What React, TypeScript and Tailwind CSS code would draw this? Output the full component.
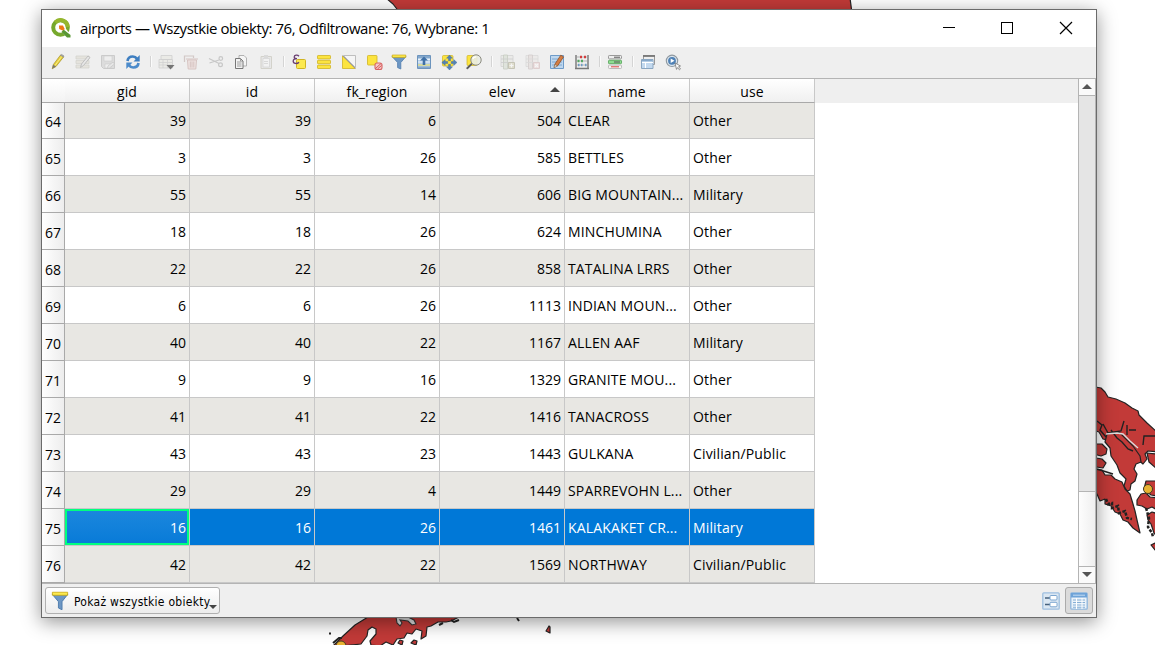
import React from "react";

type IconProps = { children: React.ReactNode; faded?: boolean };

const Icon = ({ children, faded }: IconProps) => (
  <div className="flex w-[25px] shrink-0 items-center">
    <svg viewBox="0 0 16 16" className={faded ? "h-4 w-4 overflow-visible opacity-40" : "h-4 w-4 overflow-visible"} fill="none">
      {children}
    </svg>
  </div>
);

const Sep = () => (
  <div className="w-2 shrink-0">
    <div className="h-[11px] w-px bg-[#d4d4d4] shadow-[1px_0_0_#fbfbfb]" />
  </div>
);

const Funnel = () => (
  <>
    <path d="M1 2.5h14L9.8 8.5V15l-3.2-1.4V8.5z" fill="#6d97c4" stroke="#4f7cae" strokeWidth=".8" />
    <path d="M1.2 1h13.6v2.4H1.2z" fill="#fce94f" stroke="#c4a000" strokeWidth=".6" />
  </>
);

const Toolbar = () => (
  <div className="flex h-[31px] shrink-0 items-center bg-[#efefef] pb-0.5 pl-2">
    <Icon>
      <path d="M2.2 14.8l1-4L10.4 1.2l3 2L6 12.5z" fill="#e8d13c" stroke="#a38f2a" strokeWidth=".7" />
      <path d="M10.4 1.2l1.2-.8 2.4 1.6-.6 1.2z" fill="#aaa" stroke="#777" strokeWidth=".5" />
      <path d="M5 11.5L11.8 2.4" stroke="#f8ec8a" />
      <path d="M2.2 14.8l1-4 2.8 1.8z" fill="#777" />
    </Icon>
    <Icon faded>
      <path d="M1 2h13v3H1zM1 6.500h13v3H1zM1 11h13v3H1z" fill="#d7d3c4" stroke="#aaa898" strokeWidth=".7" />
      <path d="M5.500 13.500l1-3.500 6.500-8 2 1.500-6.500 8z" fill="#ddd" stroke="#777" />
    </Icon>
    <Icon faded>
      <path d="M1.500 1.500h13v13h-11l-2-2z" fill="#c2c2c2" stroke="#989898" />
      <path d="M4 2h8v5H4zM5 10h6v4H5z" fill="#eee" stroke="#999" strokeWidth=".6" />
      <path d="M8 12l5-4 1.500 2-5 4-2 .5z" fill="#ddd" stroke="#888" strokeWidth=".7" />
    </Icon>
    <Icon>
      <path d="M2.500 7c.4-3 2.600-4.500 5.300-4.500 1.900 0 3.300.9 4.200 2.200" stroke="#3f7fc1" strokeWidth="2.700" />
      <path d="M14.700 1v6.500H8.500z" fill="#3f7fc1" />
      <path d="M13.500 9c-.4 3-2.600 4.500-5.300 4.500-1.900 0-3.300-.9-4.200-2.200" stroke="#4c8bcb" strokeWidth="2.700" />
      <path d="M1.300 15V8.500h6.200z" fill="#4c8bcb" />
    </Icon>
    <Sep />
    <Icon>
      <g opacity=".45">
        <path d="M3 1.500h11v4H3zM1 5.500h13.500V14H1z" fill="#e5e5dc" stroke="#aaa" strokeWidth=".8" />
        <path d="M1 8.500h13M1 11h13M5 5v9M9.500 5v9" stroke="#aaa" strokeWidth=".7" />
      </g>
      <path d="M8.500 11h8l-4 4.500z" fill="#757575" />
    </Icon>
    <Icon faded>
      <path d="M1.500 8V2h9v2" stroke="#a98f8b" strokeWidth="1.200" />
      <path d="M4.500 6h9l-.7 9H5.200z" fill="#ecd0cc" stroke="#b2847e" />
      <path d="M3 5h12M7.300 7.500v6M9 7.500v6M10.800 7.500v6" stroke="#b2847e" />
    </Icon>
    <Icon faded>
      <path d="M1 4.500l10 5M1.500 9L11 6" stroke="#8d8d8d" strokeWidth="1.100" />
      <circle cx="12.800" cy="4.500" r="1.800" stroke="#8d8d8d" strokeWidth="1.200" />
      <circle cx="12.500" cy="10.800" r="1.900" stroke="#8d8d8d" strokeWidth="1.200" />
    </Icon>
    <Icon>
      <path d="M6 1.500h5l2.500 2.500v8H6z" fill="#f5f5f5" stroke="#aaa" strokeWidth=".9" />
      <path d="M2.500 4.500h5L10 7v7.500H2.500z" fill="#f3f3f3" stroke="#777" />
      <path d="M4 8h4.500M4 10h4.500M4 12h4.500M7.500 4.500V7H10" stroke="#8a8a8a" strokeWidth=".8" />
    </Icon>
    <Icon faded>
      <path d="M3 2.500h10.500v12H3z" fill="#ddd" stroke="#aaa898" />
      <path d="M5 4.500h6.500v8.500H5z" fill="#f7f7f7" stroke="#aaa" strokeWidth=".7" />
      <path d="M6 1h4v3H6z" fill="#bbb" />
      <path d="M6 7.500h4M6 9.500h4" stroke="#aaa" strokeWidth=".8" />
    </Icon>
    <Sep />
    <Icon>
      <rect x="5.500" y="5.500" width="9" height="9" rx="1" fill="#fce94f" stroke="#d0b423" />
      <path d="M8 2.200C6.500.5 3.200 1 3.200 3c0 1.300 1.300 1.700 2.800 1.700C4 4.700 2.200 5.300 2.200 7.300c0 2.600 4 2.900 5.800.9" stroke="#6b3f72" strokeWidth="1.300" />
    </Icon>
    <Icon>
      <g fill="#fce43f" stroke="#d0b423" strokeWidth=".8">
        <rect x="1.500" y="1.500" width="13" height="3.400" rx=".6" />
        <rect x="1.500" y="6.300" width="13" height="3.400" rx=".6" />
        <rect x="1.500" y="11.100" width="13" height="3.400" rx=".6" />
      </g>
    </Icon>
    <Icon>
      <path d="M2.500 1.500h12v12z" fill="#f5f5f5" stroke="#b0b0b0" strokeWidth=".8" />
      <path d="M1.500 2v12.500H14z" fill="#fce43f" stroke="#d0b423" strokeWidth=".8" />
      <path d="M1.500 1.500l13 13" stroke="#999" />
    </Icon>
    <Icon>
      <rect x="1.500" y="1.500" width="9.500" height="9.500" rx=".8" fill="#fce43f" stroke="#d0b423" strokeWidth=".8" />
      <rect x="9" y="9" width="7" height="6.500" rx="2" fill="#f3c9c9" stroke="#d86464" strokeWidth="1.100" />
      <path d="M9.500 14.500l5.500-5M11.500 15l4-3.500" stroke="#d44c4c" strokeWidth=".9" />
    </Icon>
    <Icon><Funnel /></Icon>
    <Icon>
      <path d="M1.500 1.500h13v13h-13z" fill="#b7d0e9" stroke="#6c94bd" />
      <path d="M2 2h12v2H2zM2 12.500h12v1.500H2z" fill="#85a8cc" />
      <path d="M2 11h12" stroke="#eadf70" strokeWidth="1.200" />
      <path d="M2 5.500h12M2 8h12" stroke="#edf4fa" />
      <path d="M8 2.500l4 4H9.300V11H6.700V6.500H4z" fill="#3f70a6" />
    </Icon>
    <Icon>
      <rect x="1.500" y="1.500" width="10.500" height="10.500" rx="1" fill="#fce43f" stroke="#d0b423" strokeWidth=".7" />
      <path d="M8.500 1l3 3.200h-2v2.500h-2V4.200h-2zM8.500 16l3-3.200h-2v-2.500h-2v2.500h-2zM.8 8.500l3.400-3v2h2.500v2H4.200v2zM16 8.500l-3.300-3v2h-2.500v2h2.500v2z" fill="#5383b5" stroke="#416b99" strokeWidth=".4" />
    </Icon>
    <Icon>
      <rect x="1" y="1.500" width="10" height="10" rx="1" fill="#fce43f" stroke="#d0b423" strokeWidth=".7" />
      <path d="M6 9.500L.8 14.800" stroke="#777" strokeWidth="2" />
      <path d="M6 9.500L1 14.600" stroke="#333" strokeWidth=".8" />
      <circle cx="10" cy="6" r="5.200" fill="#e9ece4" fillOpacity=".9" stroke="#8b8b80" />
      <path d="M6.800 5.200c.4-1.600 1.800-2.500 3.500-2.400" stroke="#fff" strokeWidth="1.200" />
    </Icon>
    <Sep />
    <Icon faded>
      <path d="M2 1.500h12v11H2z" fill="#e4e4df" stroke="#aaa" strokeWidth=".8" />
      <path d="M4.500 1h4v14h-4z" fill="#c9d3c2" stroke="#8d997f" strokeWidth=".8" />
      <path d="M2 5h12M2 8.500h12" stroke="#999" strokeWidth=".8" />
      <path d="M9.500 8.500h6v6h-6z" fill="#c8c49a" stroke="#888663" />
      <path d="M12.500 9.500v4M10.500 11.500h4" stroke="#fff" strokeWidth="1.200" />
    </Icon>
    <Icon faded>
      <path d="M2 1.500h12v11H2z" fill="#e8e4e2" stroke="#bbb" strokeWidth=".8" />
      <path d="M4.500 1h4v14h-4z" fill="#ddd0cd" stroke="#a99" strokeWidth=".8" />
      <path d="M2 5h12M2 8.500h12" stroke="#bbb" strokeWidth=".8" />
      <path d="M9.500 8.500h6v6h-6z" fill="#eac9c9" stroke="#c69e9e" />
      <path d="M11 10l3 3m0-3l-3 3" stroke="#fff" strokeWidth="1.100" />
    </Icon>
    <Icon>
      <path d="M1.500 1.500h13v13h-13z" fill="#bed7ef" stroke="#6e9bc8" />
      <path d="M3 5h10M3 8h10M3 11h10" stroke="#78a3cd" strokeWidth=".9" />
      <path d="M5 13.500l1-3.500 5.800-8.800 2.700 1.700-5.800 8.800z" fill="#d57d43" stroke="#915125" strokeWidth=".8" />
      <path d="M5 13.700l.9-3.200 2.500 1.500z" fill="#f2dec5" stroke="#555" strokeWidth=".4" />
    </Icon>
    <Icon>
      <path d="M2 1v13.500M14 1v13.500M1 14.500h14" stroke="#777" strokeWidth="1.400" />
      <path d="M2 3h12M2 7h12M2 11h12" stroke="#999" strokeWidth=".7" />
      <path d="M6 1.800h2v2.400H6zM10 1.800h2v2.400h-2z" fill="#d23d3d" />
      <path d="M3.500 5.800h2v2.400h-2zM7 5.800h2v2.400H7z" fill="#54a862" />
      <path d="M4 9.800h1.500v2.400H4zM7 9.800h1.500v2.400H7zM11 9.800h1.500v2.400H11z" fill="#6f9cc6" />
    </Icon>
    <Sep />
    <Icon>
      <rect x="1.500" y="1.500" width="13" height="3.400" rx=".8" fill="#eee" stroke="#999" />
      <rect x="1.500" y="6.300" width="13" height="3.400" rx=".8" fill="#8fdc91" stroke="#62ad65" />
      <rect x="1.500" y="11.100" width="13" height="3.400" rx=".8" fill="#f7f3f3" stroke="#bbb" />
      <path d="M7 3.200h6M7 8h6" stroke="#555" />
      <path d="M4 12.800h8" stroke="#d44" strokeWidth="1" />
    </Icon>
    <Sep />
    <Icon>
      <path d="M3.500 1.500h11v9h-11z" fill="#eee" stroke="#999" />
      <path d="M3 2h12" stroke="#777" strokeWidth="1.800" />
      <path d="M1.500 5.500h11.500v9H1.500z" fill="#c3d9ef" stroke="#8ba6c1" />
      <path d="M2 6.500h10.500" stroke="#87a8c9" strokeWidth="1.500" />
      <path d="M5.500 8v6M2 8.500h11" stroke="#fff" strokeWidth="1" />
    </Icon>
    <Icon>
      <circle cx="7" cy="6.800" r="5.700" fill="#dbe5ee" stroke="#8f989f" strokeWidth="1.100" />
      <circle cx="7" cy="6.800" r="3.900" fill="#4f81b5" />
      <path d="M5.700 4.500L9.500 6.800 5.700 9z" fill="#fff" />
      <path d="M10 9l5.500 3-2 .7 2 2.300-1 .9-2-2.300-1 1.800z" fill="#fff" stroke="#777" strokeWidth=".8" />
    </Icon>
  </div>
);

type Row = [number, number, number, number, number, string, string];

const rows: Row[] = [
  [64, 39, 39, 6, 504, "CLEAR", "Other"],
  [65, 3, 3, 26, 585, "BETTLES", "Other"],
  [66, 55, 55, 14, 606, "BIG MOUNTAIN...", "Military"],
  [67, 18, 18, 26, 624, "MINCHUMINA", "Other"],
  [68, 22, 22, 26, 858, "TATALINA LRRS", "Other"],
  [69, 6, 6, 26, 1113, "INDIAN MOUN...", "Other"],
  [70, 40, 40, 22, 1167, "ALLEN AAF", "Military"],
  [71, 9, 9, 16, 1329, "GRANITE MOU...", "Other"],
  [72, 41, 41, 22, 1416, "TANACROSS", "Other"],
  [73, 43, 43, 23, 1443, "GULKANA", "Civilian/Public"],
  [74, 29, 29, 4, 1449, "SPARREVOHN L...", "Other"],
  [75, 16, 16, 26, 1461, "KALAKAKET CR...", "Military"],
  [76, 42, 42, 22, 1569, "NORTHWAY", "Civilian/Public"],
];

const columns = ["gid", "id", "fk_region", "elev", "name", "use"];

const TableRow = ({ row, index }: { row: Row; index: number }) => {
  const [num, ...cells] = row;
  const selected = num === 75;
  const tone = selected ? "bg-[#0078d7] text-white" : index % 2 === 0 ? "bg-[#e8e7e3]" : "bg-white";
  return (
    <div className={index === 0 ? "flex h-9 shrink-0" : "flex h-[37px] shrink-0"}>
      <div className="flex w-[23px] items-center border-r border-b border-[#a9a9a9] bg-linear-to-r from-white to-[#ededed] pt-0.5 pl-[3px]">
        {num}
      </div>
      {cells.map((cell, i) => (
        <div key={i} className={`relative flex w-[125px] items-center border-r border-b border-[#c8c8c8] px-[3px] whitespace-nowrap ${i < 4 ? "justify-end" : ""} ${tone}`}>
          {selected && i === 0 && (
            <div className="absolute inset-0 border-2 border-[#00ff80] bg-linear-to-b from-[#1a87dd] to-[#087bd8]" />
          )}
          <span className={i < 4 ? "relative" : i === 4 ? "relative tracking-[0.15px]" : "relative tracking-[0.15px]"}>{cell}</span>
        </div>
      ))}
    </div>
  );
};

const MapCanvas = () => (
  <svg className="absolute inset-0 h-full w-full" viewBox="0 0 1155 645">
    <g fill="#c23a38" stroke="#232323" strokeWidth="1.200" strokeLinejoin="round">
      <path d="M386-2l7 6 7 9h452l-2-15z" />
      <path d="M1090 386l11 2 4 4 3 5 8 2 9 4 7 5 6 3 1 4 8 8 11 10v19l-10-1-3 3 2 5-4 5-6-5-5-8-9-6-4-4-8 0-8-2-4-7-9-3z" />
      <path d="M1107 434l12-2 6 6 8 8 7 10 1 6-5 2-2 5 3 5-2 7-4 3-1 6-3 1-3-5 2-7-6-6-3-8-6-9-1-8-5-6z" />
      <path d="M1147 453l10 1v15l-8-7z" />
      <path d="M1090 444l12 0 5 5-1 5-5 2-11-3z" />
      <path d="M1090 457l12 2 4 4-3 5-13-2z" />
      <path d="M1090 469l12 1 3 5 6 0 4 4 7 3 3 7 5 5 3 10 2 7 2 9 3 13-7-5-5-6-5-2-3-6-5-2-4-6-6-2 0-5-5 2-3-7-6-3-8 3z" />
      <path d="M1145 485l1-4h12v15l-7-1-7-6z" />
      <path d="M1137 500l4-6 5-1 4 4 7 1v12l-5-3-5 2-5-3-5-1z" />
      <path d="M1147 515l5-3 6 2v24l-4-5-3-9-3-4z" />
      <path d="M1151 545l4-2 3 5-3 2z" />
      <path d="M332 647l11-11 12-11 13-8h91l-8 4-5 1-8 0-7 4-4 1-1 9-5 3 1-8-6-2-4 5-5-1-3 5-7 1-4 6-7-3-6 4-9-1-1-4 6-7 0-5-4-2-4 3-1 6-6 8z" />
      <path d="M398 643l2-3 3 1-1 4zM411 643l3-3 3 1-1 4z" />
      <path d="M546 631l3-5 1 1v6z" />
    </g>
    <path d="M396 617l1 6 3 3 2-3-2-3 8 1 4 4 4-1-2-4-6-3" fill="#ddd" stroke="#333" strokeWidth="1.100" />
    <path d="M1097 421l5 4-2 5 6 7M1103 424l5 9 13-2 3-10m3 4v10m2-5l7 0m7 15l1-9h11m-44-6l6 8 5 4 6 7 5 2M1097 469l16 5" fill="none" stroke="#222" strokeWidth="1.400" />
    <path d="M1106 434l11-1 6 1 7 7 8 7" fill="none" stroke="#ddd" strokeWidth="1.400" />
    <path d="M1106 499l2 5 4-1 0 5 6-2 1 7 6-2 2 7 5 1M1146 508l3 10-1 9 4 6 1 4" fill="none" stroke="#222" strokeWidth="2.500" strokeDasharray="3 1.500" />
    <path d="M329 633.500h2M333 643l6-5 3 0M451 620l3 2 5-2M439 625l4-2M517 618l2 3" fill="none" stroke="#222" strokeWidth="2" />
    <circle cx="1148" cy="489" r="4.500" fill="#e8b332" stroke="#443a22" />
    <circle cx="341" cy="646" r="5" fill="#e8b332" stroke="#443a22" />
  </svg>
);

export default function App() {
  return (
    <div className="relative h-[645px] w-[1155px] overflow-hidden bg-white pt-[9px] pl-[41px] font-['Open_Sans','Noto_Sans',sans-serif] text-[14px] text-black">
      <MapCanvas />
      <div className="relative flex h-[609px] w-[1056px] flex-col border border-[#6b6b6b] bg-[#efefef] shadow-[0_4px_18px_rgba(0,0,0,0.42)]">
        <div className="flex h-[37px] shrink-0 items-center bg-white pb-px pl-[9px]">
          <svg viewBox="0 0 20 20" className="h-5 w-5" fill="none">
            <circle cx="9.500" cy="9.500" r="7.300" stroke="#76a82c" strokeWidth="4" />
            <path d="M4.300 4.300A7.300 7.300 0 0 1 16.800 9" stroke="#96b72d" strokeWidth="4" />
            <path d="M10 8.800h3.500l6 8.200-.8 2.200h-3.200L9.500 12.500z" fill="#fff" />
            <path d="M12.500 11.500l7 5.500v2.500h-3.500l-5.500-5.500z" fill="#589632" />
            <path d="M8 7.500h4l1.800 3.800-2.200 1.300L8.200 11z" fill="#ee7913" />
          </svg>
          <div className="ml-[9px] w-[860px] whitespace-nowrap text-[15px] tracking-[-0.45px]">
            airports — Wszystkie obiekty: 76, Odfiltrowane: 76, Wybrane: 1
          </div>
          <svg viewBox="0 0 130 14" className="ml-[3px] h-[14px] w-[130px] shrink-0" fill="none" stroke="#000" shapeRendering="crispEdges">
            <path d="M0 6.500h12" />
            <path d="M58.500 1.500h11v11h-11z" />
            <path d="M117 1l12 12M129 1l-12 12" shapeRendering="auto" strokeWidth="1.200" />
          </svg>
        </div>
        <Toolbar />
        <div className="flex h-[506px] shrink-0 border-t border-b border-[#b4b4b4]">
          <div className="flex flex-1 flex-col bg-white">
            <div className="flex h-6 shrink-0 bg-[#efefef]">
              <div className="w-[23px] border-b border-[#a9a9a9] bg-linear-to-b from-white to-[#f3f3f3]" />
              {columns.map((name, i) => (
                <div key={name} className="relative flex w-[125px] items-center justify-center border-r border-b border-r-[#c8c8c8] border-b-[#a9a9a9] bg-linear-to-b from-white to-[#f0f0f0] pt-0.5 tracking-[0.1px]">
                  {name}
                  {i === 3 && (
                    <svg viewBox="0 0 10 5" className="absolute top-[8px] right-[4px] h-[5px] w-[10px]">
                      <path d="M0 5l5-5 5 5z" fill="#444" />
                    </svg>
                  )}
                </div>
              ))}
            </div>
            {rows.map((row, i) => <TableRow key={row[0]} row={row} index={i} />)}
          </div>
          <div className="flex w-[18px] flex-col border-r border-l border-[#b4b4b4] bg-linear-to-r from-[#fdfdfd] to-[#efefef]">
            <div className="flex h-[17px] items-center justify-center border-b border-[#b4b4b4] bg-[#fafafa] pb-px">
              <svg viewBox="0 0 10 5" className="h-[5px] w-[10px]"><path d="M0 5l5-5 5 5z" fill="#555" /></svg>
            </div>
            <div className="h-[396px] border-b border-[#b4b4b4] bg-[#e5e5e5]" />
            <div className="flex-1" />
            <div className="flex h-[17px] items-center justify-center border-t border-[#b4b4b4] bg-[#fafafa] pb-0.5">
              <svg viewBox="0 0 10 5" className="h-[5px] w-[10px]"><path d="M0 0l5 5 5-5z" fill="#555" /></svg>
            </div>
          </div>
        </div>
        <div className="flex flex-1 items-center justify-between pr-[3px] pl-[3px]">
          <div className="relative flex h-[27px] w-[175px] items-center rounded-[3px] border border-[#b0b0b0] bg-linear-to-b from-white to-[#ededed] pl-[5px]">
            <svg viewBox="0 0 16 16" className="h-5 w-[18px]" preserveAspectRatio="none" fill="none"><Funnel /></svg>
            <span className="ml-[5px] pt-0.5 whitespace-nowrap font-['DejaVu_Sans_Condensed','DejaVu_Sans',sans-serif] text-[12px] tracking-[0.27px]">
              Pokaż wszystkie obiekty
            </span>
            <svg viewBox="0 0 8 4" className="absolute right-[2px] bottom-[4px] h-1 w-2"><path d="M0 0h8L4 4z" fill="#444" /></svg>
          </div>
          <div className="flex items-center">
            <svg viewBox="0 0 18 18" className="mr-[5px] h-[18px] w-[18px]" fill="none">
              <rect x=".8" y=".8" width="16.400" height="16.400" rx="1" fill="#dbe7f2" stroke="#9fbfdf" strokeWidth="1.300" />
              <path d="M3 6h5M3 12.500h5" stroke="#47617c" strokeWidth="1.700" />
              <rect x="8" y="3.500" width="7" height="4.500" rx="1" fill="#fff" stroke="#7ca6d0" />
              <rect x="8" y="10.300" width="7" height="4.500" rx="1" fill="#fff" stroke="#7ca6d0" />
            </svg>
            <div className="flex h-[27px] w-7 items-center justify-center rounded-[3px] border border-[#ababab] bg-[#dbdbdb]">
              <svg viewBox="0 0 18 18" className="h-[18px] w-[18px]" fill="none">
                <rect x=".8" y=".8" width="16.400" height="16.400" rx="1" fill="#eaf2f9" stroke="#8fb5dc" strokeWidth="1.300" />
                <path d="M1 1h16v4.500H1z" fill="#6ea3d8" />
                <path d="M3 3.300h12" stroke="#a9caea" strokeWidth="1.500" />
                <path d="M3 8h12M3 10.500h12M3 13h12M3 15.300h12" stroke="#85aed6" strokeWidth="1.100" />
                <path d="M6.500 6v11M12 6v11" stroke="#fff" />
              </svg>
            </div>
          </div>
        </div>
      </div>
    </div>
  );
}
